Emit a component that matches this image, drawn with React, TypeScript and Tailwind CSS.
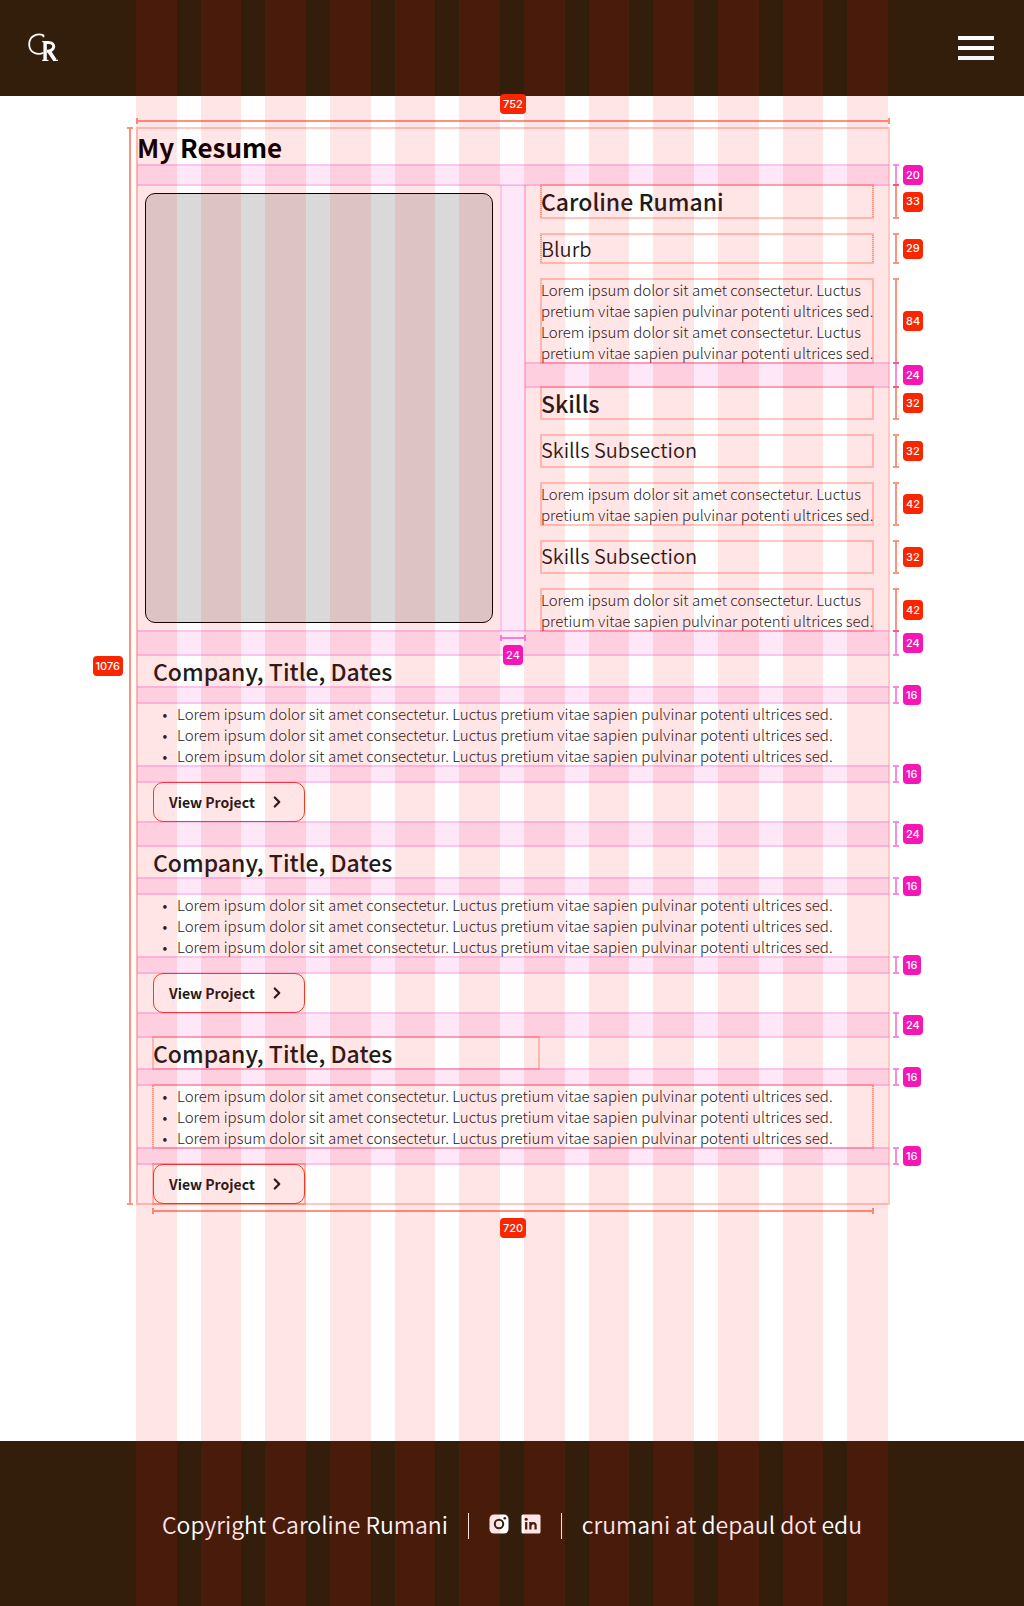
import type { ReactNode } from "react";
import { ChevronRight } from "lucide-react";

type Tone = "red" | "pink";
type Side = "right" | "left" | "top" | "bottom";

const SENTENCE = "Lorem ipsum dolor sit amet consectetur. Luctus pretium vitae sapien pulvinar potenti ultrices sed.";

const lineTone: Record<Tone, string> = {
  red: "border-[#ff2600]/50",
  pink: "border-[#f516b5]/50",
};
const fillTone: Record<Tone, string> = {
  red: "bg-[#ff2600]/50",
  pink: "bg-[#f516b5]/50",
};
const badgeTone: Record<Tone, string> = {
  red: "bg-[#fa2600]",
  pink: "bg-[#f516b5]",
};
const sideBox: Record<Side, string> = {
  right: "left-full -inset-y-px ml-1 flex-row",
  left: "right-full -inset-y-px mr-1 flex-row-reverse",
  top: "bottom-full -inset-x-px mb-1 flex-col-reverse",
  bottom: "top-full -inset-x-px mt-1 flex-col",
};

/* Dimension line with end caps and its value, attached to one side of the parent box. */
function Measure({ side, tone, value }: { side: Side; tone: Tone; value: number }) {
  const vertical = side === "right" || side === "left";
  return (
    <span className={`pointer-events-none absolute z-20 flex items-center gap-1 ${sideBox[side]}`}>
      <span
        className={`flex shrink-0 justify-center ${lineTone[tone]} ${
          vertical ? "w-1.5 self-stretch border-y-2" : "h-1.5 flex-col items-center self-stretch border-x-2"
        }`}
      >
        <span className={`${fillTone[tone]} ${vertical ? "w-0.5 self-stretch" : "h-0.5 w-full"}`} />
      </span>
      <span
        className={`flex h-5 shrink-0 items-center rounded px-[3px] font-['Inter'] text-[11px] leading-none font-medium text-white ${badgeTone[tone]}`}
      >
        {value}
      </span>
    </span>
  );
}

/* Thin frame around a measured box; the dotted kind has finely striped sides. */
function Frame({ dotted = false }: { dotted?: boolean }) {
  if (!dotted) {
    return <span className="pointer-events-none absolute -inset-px z-20 border-2 border-[#ff2600]/25" />;
  }
  return (
    <span className="pointer-events-none absolute -inset-px z-20 flex justify-between border-y-2 border-[#ff2600]/25">
      <span className="w-0.5 bg-[repeating-linear-gradient(#ff260070_0_1px,#ff260020_1px_2px)]" />
      <span className="w-0.5 bg-[repeating-linear-gradient(#ff260070_0_1px,#ff260020_1px_2px)]" />
    </span>
  );
}

function Gap({ value, className }: { value: number; className: string }) {
  return (
    <div className={`relative ${className}`}>
      <span className="pointer-events-none absolute inset-x-0 -inset-y-px z-20 border-y-2 border-[#f516b5]/25 bg-[#f516b5]/10 bg-clip-padding" />
      <Measure side="right" tone="pink" value={value} />
    </div>
  );
}

function Box({
  value,
  dotted,
  className,
  children,
}: {
  value: number;
  dotted?: boolean;
  className: string;
  children: ReactNode;
}) {
  return (
    <div className={`relative mx-4 ${className}`}>
      {children}
      <Frame dotted={dotted} />
      <div className="absolute inset-y-0 left-0 -right-4">
        <Measure side="right" tone="red" value={value} />
      </div>
    </div>
  );
}

function Job({ framed = false }: { framed?: boolean }) {
  return (
    <section>
      <div className="relative mx-4 h-8 max-w-[386px]">
        <h2 className="text-[23px] leading-8 font-medium">Company, Title, Dates</h2>
        {framed && <Frame />}
      </div>
      <Gap value={16} className="h-4" />
      <div className="relative mx-4">
        <ul className="list-none text-[15px] leading-[21px] font-light">
          {[0, 1, 2].map((n) => (
            <li key={n} className="flex">
              <span className="w-6 text-center">•</span>
              <span>{SENTENCE}</span>
            </li>
          ))}
        </ul>
        {framed && <Frame dotted />}
      </div>
      <Gap value={16} className="h-4" />
      <div className="relative mx-4 flex w-fit">
        <button
          type="button"
          className="flex h-10 w-[152px] items-center justify-between rounded-[10px] border border-[#f04423] px-[15px] text-[14px] leading-5 font-bold"
        >
          View Project
          <span className="flex size-6 items-center justify-center">
            <ChevronRight size={18} strokeWidth={3} />
          </span>
        </button>
        {framed && <Frame />}
      </div>
    </section>
  );
}

function Logo() {
  return (
    <svg viewBox="0 0 32 30" className="h-[30px] w-8" fill="none" stroke="#fff" aria-hidden="true">
      <path d="M15.4 4.2 V2.4 C10 0 1.2 2.4 1.2 11.2 C1.2 19.7 9.5 22.6 15.5 19.8" strokeWidth="1.8" />
      <path d="M17.1 9 V27" strokeWidth="3.4" />
      <path d="M14.2 8.6 H21 M14.2 27.4 H20.5 M25.5 27.4 H30" strokeWidth="1.2" />
      <path d="M18 9.4 H20.5 C27.7 9.4 27.7 17.9 19 18.2" strokeWidth="3" />
      <path d="M20.5 17.5 L27 27.2" strokeWidth="3.8" />
    </svg>
  );
}

export default function App() {
  return (
    <div className="relative flex flex-col bg-white font-['Noto_Sans_CJK_JP','Noto_Sans_CJK_SC',sans-serif] text-[#1c1c1c]">
      <header className="flex h-24 items-center justify-between bg-[#331e0c] pr-[30px] pl-7">
        <a href="#home" aria-label="Home">
          <Logo />
        </a>
        <button type="button" aria-label="Menu" className="flex w-9 flex-col gap-1.5">
          <span className="h-1 bg-white" />
          <span className="h-1 bg-white" />
          <span className="h-1 bg-[#f5f5fd]" />
        </button>
      </header>

      <main className="pt-8 pb-[237px] pl-0.5">
        <div className="relative mx-auto w-full max-w-[752px]">
          <Frame />
          <Measure side="top" tone="red" value={752} />
          <Measure side="left" tone="red" value={1076} />

          <h1 className="h-[37px] text-[26px] leading-[38px] font-bold text-black">My Resume</h1>
          <Gap value={20} className="h-5" />

          <div className="relative grid grid-cols-[1fr_24px_1fr]">
            <div className="p-2">
              <div className="h-full rounded-[10px] border border-black bg-[#d9d9d9]" />
            </div>
            <div className="relative">
              <span className="pointer-events-none absolute -inset-x-px inset-y-0 z-20 border-x-2 border-[#f516b5]/25 bg-[#f516b5]/10 bg-clip-padding" />
              <Measure side="bottom" tone="pink" value={24} />
            </div>
            <div>
              <section className="flex flex-col gap-4">
                <Box value={33} dotted className="h-[33px]">
                  <h2 className="text-[23px] leading-8 font-medium">Caroline Rumani</h2>
                </Box>
                <Box value={29} dotted className="h-[29px]">
                  <h3 className="text-[20px] leading-[30px] font-[350]">Blurb</h3>
                </Box>
                <Box value={84} className="text-[15px] leading-[21px] font-light">
                  <p className="-mr-2">{SENTENCE}</p>
                  <p className="-mr-2">{SENTENCE}</p>
                </Box>
              </section>
              <Gap value={24} className="h-6" />
              <section className="flex flex-col gap-4">
                <Box value={32} className="h-8">
                  <h2 className="text-[23px] leading-8 font-medium">Skills</h2>
                </Box>
                {[0, 1].map((n) => (
                  <div key={n} className="flex flex-col gap-4">
                    <Box value={32} className="h-8">
                      <h3 className="text-[20px] leading-[30px] font-[350]">Skills Subsection</h3>
                    </Box>
                    <Box value={42} className="text-[15px] leading-[21px] font-light">
                      <p className="-mr-2">{SENTENCE}</p>
                    </Box>
                  </div>
                ))}
              </section>
            </div>
          </div>

          <Gap value={24} className="h-6" />
          <Job />
          <Gap value={24} className="h-6" />
          <Job />
          <Gap value={24} className="h-6" />
          <Job framed />
          <div className="absolute inset-x-4 bottom-0">
            <Measure side="bottom" tone="red" value={720} />
          </div>
        </div>
      </main>

      <footer className="flex h-[165px] items-center justify-center gap-5 bg-[#331e0c] text-[23px] leading-8 font-[350] text-white">
        <span>Copyright Caroline Rumani</span>
        <span className="mt-1 h-[26px] w-px bg-white" />
        <span className="flex items-center gap-3">
          <a href="#instagram" aria-label="Instagram">
            <svg viewBox="0 0 20 20" className="size-5" aria-hidden="true">
              <rect x="0.5" y="0.5" width="19" height="19" rx="4.5" fill="#fff" />
              <circle cx="10" cy="10" r="4.2" fill="none" stroke="#331e0c" strokeWidth="2" />
              <circle cx="15.8" cy="4.2" r="1.3" fill="#331e0c" />
            </svg>
          </a>
          <a href="#linkedin" aria-label="LinkedIn">
            <svg viewBox="0 0 20 20" className="size-5" aria-hidden="true">
              <rect x="0.5" y="0.5" width="19" height="19" rx="1.5" fill="#fff" />
              <g fill="none" stroke="#331e0c" strokeWidth="2.2">
                <path d="M5.2 8 V15.5" />
                <path d="M9.4 15.5 V8" />
                <path d="M9.6 11.5 C10 8.2 14.6 8.2 14.6 11.5 V15.5" />
              </g>
              <circle cx="5.2" cy="5.2" r="1.5" fill="#331e0c" />
            </svg>
          </a>
        </span>
        <span className="mt-1 h-[26px] w-px bg-white" />
        <span>crumani at depaul dot edu</span>
      </footer>

      <div className="pointer-events-none absolute inset-0 z-10">
        <div className="mx-auto grid h-full w-full max-w-[752px] grid-cols-12 gap-6">
          {Array.from({ length: 12 }, (_, n) => (
            <span key={n} className="bg-[#ff0000]/10" />
          ))}
        </div>
      </div>
    </div>
  );
}
